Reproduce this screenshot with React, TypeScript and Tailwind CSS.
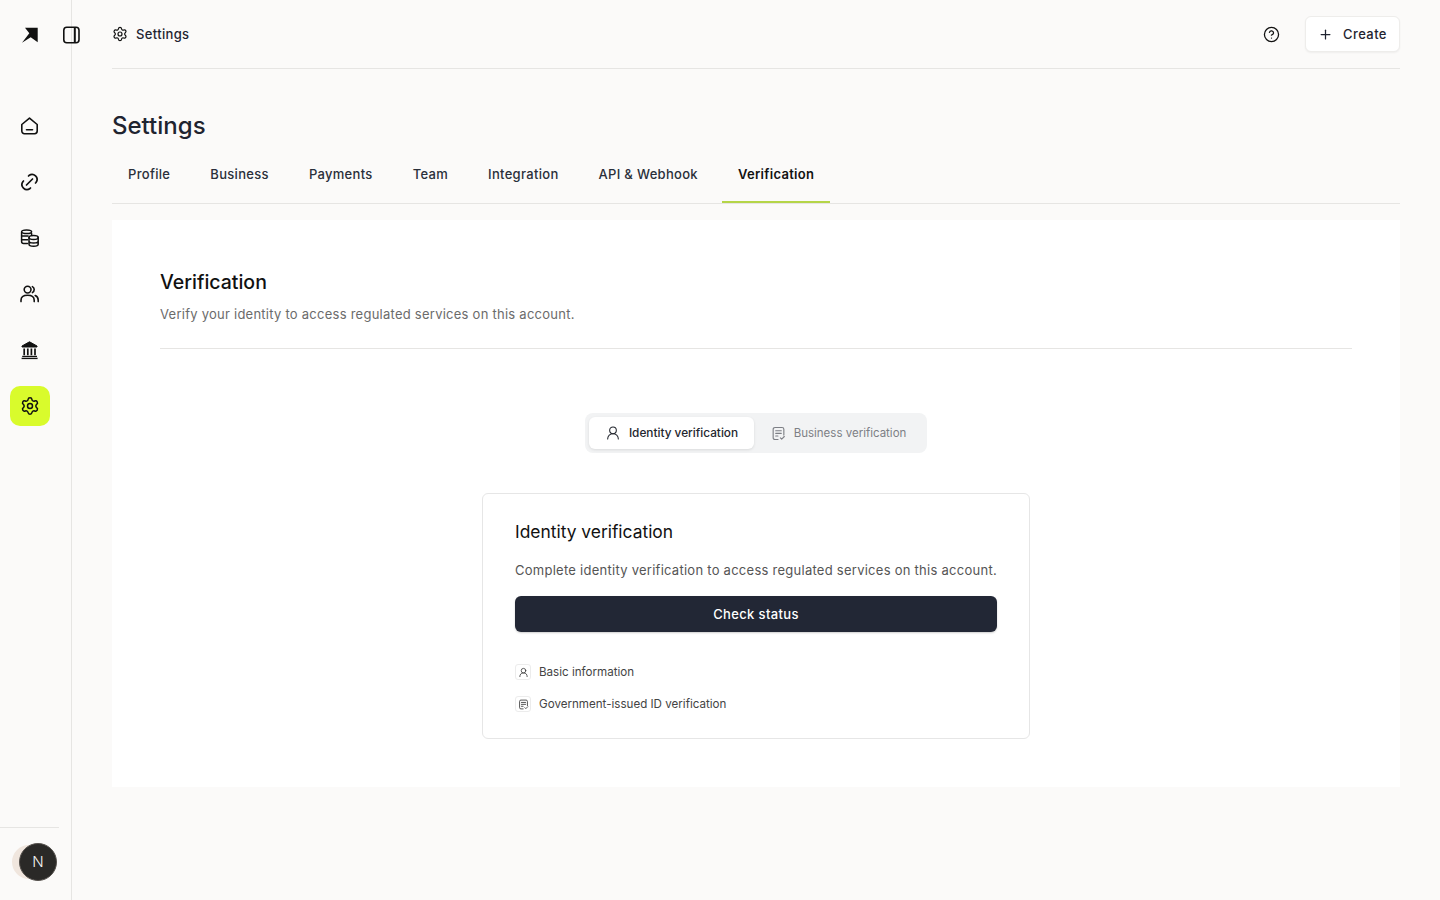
import { CircleHelp, Plus, Settings, UserRound } from "lucide-react";

const font = { fontFamily: "Inter, sans-serif" };

function LogoMark() {
  return (
    <svg width="18" height="18" viewBox="0 0 18 18" className="shrink-0 text-[#111]">
      <path d="M4 1.7H16.7V16.3L9.7 11.3 1 16.7 8.3 7.3Z" fill="currentColor" />
    </svg>
  );
}

function PanelIcon() {
  return (
    <svg width="18" height="18" viewBox="0 0 18 18" fill="none" stroke="#111" strokeWidth="1.6" className="shrink-0">
      <rect x="0.8" y="1.3" width="15.2" height="15.4" rx="3" />
      <path d="M11.8 2v14" strokeWidth="2" />
    </svg>
  );
}

function HomeIcon() {
  return (
    <svg width="20" height="20" viewBox="0 0 20 20" fill="none" stroke="#111" strokeWidth="1.6" strokeLinejoin="round" strokeLinecap="round">
      <path d="M1.8 8.5 9.5 2.2l7.7 6.3v6.6a2.6 2.6 0 0 1-2.6 2.6H4.4a2.6 2.6 0 0 1-2.6-2.6Z" />
      <path d="M6.5 13.8h6" />
    </svg>
  );
}

function LinkIcon() {
  return (
    <svg width="24" height="24" viewBox="0 0 24 24" fill="none" stroke="#111" strokeWidth="1.7" strokeLinecap="round" strokeLinejoin="round">
      <path d="M8.5 15l6-6" />
      <path d="M10.5 6l.5-.5a5 5 0 0 1 7 7l-.5.5" />
      <path d="M12.5 18l-.5.5a5 5 0 0 1-7-7l.5-.5" />
    </svg>
  );
}

function CoinsIcon() {
  return (
    <svg width="20" height="20" viewBox="0 0 20 20" fill="none" stroke="#111" strokeWidth="1.5" strokeLinecap="round">
      <path d="M7.5 15.5H3.6a2 2 0 0 1-2-2V4.2" />
      <ellipse cx="6.6" cy="3.8" rx="5" ry="1.8" />
      <path d="M1.6 8h6.5M1.6 11.8h6M11.6 5.6V7" />
      <ellipse cx="13.6" cy="9.6" rx="4.6" ry="2" />
      <path d="M9 9.6v6.6c0 1.1 2 2 4.6 2s4.6-.9 4.6-2V9.6M9 13c0 1.1 2 2 4.6 2s4.6-.9 4.6-2" />
    </svg>
  );
}

function UsersIcon() {
  return (
    <svg width="20" height="20" viewBox="0 0 20 20" fill="none" stroke="#111" strokeWidth="1.6" strokeLinecap="round">
      <circle cx="7.6" cy="5.6" r="3.4" />
      <path d="M1 17.6v-1.4c0-3 2.6-5 6.6-5s6.6 2 6.6 5v1.4" />
      <path d="M12.4 2.6a3.4 3.4 0 0 1 0 6M15.2 11.6c1.8.7 3 2.2 3 4.4v1.6" />
    </svg>
  );
}

function BankIcon() {
  return (
    <svg width="20" height="20" viewBox="0 0 20 20" fill="none" stroke="#111">
      <path d="M9.5 1.8 17 6v1H2V6Z" fill="#111" strokeWidth="1" strokeLinejoin="round" />
      <path d="M4.2 8.6v6.6M7.8 8.6v6.6M11.4 8.6v6.6M15 8.6v6.6" strokeWidth="1.7" />
      <path d="M2.2 16.4h14.8" strokeWidth="1.2" />
      <path d="M1.6 18.4h16" strokeWidth="1.4" />
    </svg>
  );
}

function DocCheckIcon({ size, color }: { size: number; color: string }) {
  return (
    <svg width={size} height={size} viewBox="0 0 16 16" fill="none" stroke={color} strokeWidth="1.2" strokeLinecap="round" strokeLinejoin="round">
      <path d="M7.5 14.4H4.2a1.9 1.9 0 0 1-1.9-1.9V3.5a1.9 1.9 0 0 1 1.9-1.9h7.6a1.9 1.9 0 0 1 1.9 1.9v6.2" />
      <path d="M5 5h6M5 7.8h6M5 10.6h2.4" />
      <path d="m10 12.6 1.4 1.4 2.8-2.8" />
    </svg>
  );
}

function NavItem({ children, active }: { children: React.ReactNode; active?: boolean }) {
  return (
    <div className={`flex h-10 w-10 items-center justify-center rounded-[10px] ${active ? "bg-[#d9fb2c]" : ""}`}>
      {children}
    </div>
  );
}

const tabs = ["Profile", "Business", "Payments", "Team", "Integration", "API & Webhook", "Verification"];

function Sidebar() {
  return (
    <aside className="flex h-[900px] w-[72px] shrink-0 flex-col border-r border-[#e6e5e3]">
      <div className="flex h-[68px] items-center pl-[21px] pt-[2px]">
        <LogoMark />
        <div className="ml-6 shrink-0">
          <PanelIcon />
        </div>
      </div>
      <nav className="mt-[38px] flex flex-col gap-4 pl-2.5">
        <NavItem><HomeIcon /></NavItem>
        <NavItem><LinkIcon /></NavItem>
        <NavItem><CoinsIcon /></NavItem>
        <NavItem><UsersIcon /></NavItem>
        <NavItem><BankIcon /></NavItem>
        <NavItem active><Settings size={20} color="#111" strokeWidth={1.8} /></NavItem>
      </nav>
      <div className="mt-auto flex h-[73px] w-[59px] items-center justify-end border-t border-[#e6e5e3] pb-[4px]">
        <div className="relative mr-[2px]">
          <div className="absolute -left-[7px] top-[2px] h-[34px] w-[34px] rounded-full bg-[#f0e6de]" />
          <div className="relative flex h-[38px] w-[38px] items-center justify-center rounded-full border border-[#55514d] bg-[#2a2927] text-[15px] font-light text-[#f2f2f2]">
            N
          </div>
        </div>
      </div>
    </aside>
  );
}

export default function App() {
  return (
    <div className="flex h-[900px] w-[1440px] overflow-hidden bg-[#fbfaf9]" style={font}>
      <Sidebar />
      <main className="flex-1 px-10">
        <header className="flex h-[69px] items-center justify-between border-b border-[#e6e5e3]">
          <div className="flex items-center gap-2 text-[13px] font-medium tracking-[0.35px] text-[#1f2430]">
            <Settings size={16} color="#111" strokeWidth={1.8} />
            <span className="pt-px">Settings</span>
          </div>
          <div className="flex items-center gap-[25px]">
            <CircleHelp size={17} color="#111" strokeWidth={1.8} />
            <button className="flex h-9 w-[95px] items-center justify-center gap-2.5 rounded-md border border-[#eeedeb] bg-white text-[13px] font-medium tracking-[0.4px] text-[#1f2430] shadow-[0_1px_2px_rgba(0,0,0,0.05)]">
              <Plus size={15} strokeWidth={2} />
              <span className="pt-px">Create</span>
            </button>
          </div>
        </header>

        <h1 className="mt-[41px] text-[24px] leading-8 font-medium text-[#1f2430]">Settings</h1>

        <div className="mt-[5px] flex h-[57px] border-b border-[#e6e5e3]">
          {tabs.map((tab) => {
            const active = tab === "Verification";
            return (
              <div
                key={tab}
                className={`flex h-14 items-center px-4 text-[13px] tracking-[0.31px] ${active ? "border-b-2 border-[#b5d548] pt-[2px] font-semibold text-[#111]" : "mr-2 font-medium text-[#2a2f3a]"}`}
              >
                {tab}
              </div>
            );
          })}
        </div>

        <section className="mt-4 h-[567px] bg-white px-12 pt-12">
          <h2 className="text-[19.5px] leading-7 font-medium text-[#111]">Verification</h2>
          <p className="mt-2 text-[13px] leading-5 tracking-[0.25px] text-[#6b6b6b]">
            Verify your identity to access regulated services on this account.
          </p>
          <div className="mt-6 border-t border-[#e6e5e3]" />

          <div className="mt-16 flex justify-center">
            <div className="flex h-10 w-[342px] items-center gap-0 rounded-lg bg-[#f2f3f4] p-1 text-[11.8px] font-medium">
              <div className="flex h-8 w-[165px] items-center justify-center gap-2 rounded-md bg-white text-[#23262e] shadow-[0_1px_3px_rgba(0,0,0,0.1)]">
                <UserRound size={16} strokeWidth={1.6} color="#23262e" />
                <span className="pt-[2px]">Identity verification</span>
              </div>
              <div className="flex h-8 flex-1 items-center justify-center gap-2 text-[11.5px] font-normal text-[#7d7f85]">
                <DocCheckIcon size={15} color="#7d7f85" />
                <span className="pt-[2px]">Business verification</span>
              </div>
            </div>
          </div>

          <div className="mx-auto mt-10 h-[246px] w-[548px] rounded-md border border-[#e6e6e6] bg-white px-8 pt-6">
            <h3 className="text-[17.4px] leading-7 font-normal text-[#111]">Identity verification</h3>
            <p className="mt-[14px] whitespace-nowrap text-[13px] leading-5 tracking-[0.26px] text-[#555]">
              Complete identity verification to access regulated services on this account.
            </p>
            <button className="mt-4 h-9 w-full rounded-md bg-[#222735] text-[13px] font-medium tracking-[0.35px] text-white shadow-[0_1px_2px_rgba(0,0,0,0.2)]">
              <span className="relative top-px">Check status</span>
            </button>
            <div className="mt-8 flex flex-col gap-4 text-[11.6px] text-[#444]">
              <div className="flex h-4 items-center gap-2">
                <span className="flex h-4 w-4 items-center justify-center rounded-[3px] border border-[#ececec]">
                  <UserRound size={11} strokeWidth={1.7} color="#333" />
                </span>
                <span className="pt-[2px]">Basic information</span>
              </div>
              <div className="flex h-4 items-center gap-2">
                <span className="flex h-4 w-4 items-center justify-center rounded-[3px] border border-[#ececec]">
                  <DocCheckIcon size={11} color="#333" />
                </span>
                <span className="pt-[2px]">Government-issued ID verification</span>
              </div>
            </div>
          </div>
        </section>
      </main>
    </div>
  );
}
